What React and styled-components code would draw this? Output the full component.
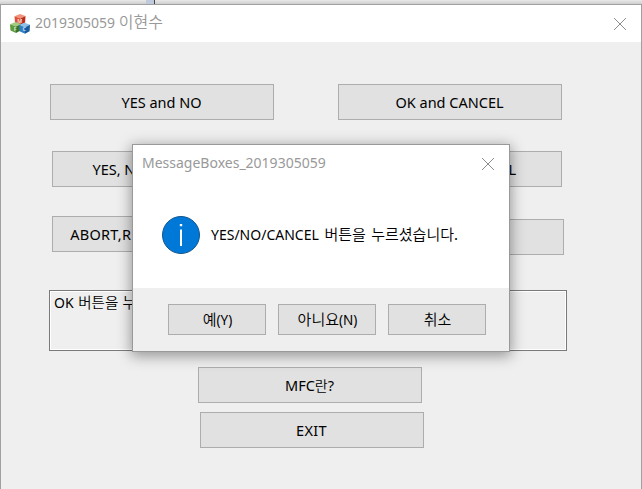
import React from "react";
import styled, { createGlobalStyle } from "styled-components";

const Global = createGlobalStyle`
  html, body { margin: 0; padding: 0; }
  body { overflow: hidden; background: #efefef; }
  * { box-sizing: border-box; }
`;

const Desktop = styled.div`
  position: relative;
  width: 642px;
  height: 489px;
  overflow: hidden;
  background: #efefef;
  font-family: "Noto Sans", "Noto Sans CJK KR", sans-serif;
  color: #000;
`;

const Backdrop = styled.div`
  display: flex;
  height: 4px;
  background: linear-gradient(#e9e9e9, #cfcfcf);
`;

const BackdropTab = styled.div`
  width: 9px;
  margin-left: 146px;
  background: #bfcbdc;
  border-right: 1px solid #444;
`;

const Window = styled.div`
  height: 485px;
  border: 1px solid #a0a0a0;
  border-bottom: 0;
  background: #efefef;
`;

const TitleBar = styled.header`
  display: flex;
  align-items: center;
  height: 37px;
  padding: 0 15px 0 9px;
  background: #fff;
`;

const Title = styled.h1`
  flex: 1;
  margin: 0 0 1px 5px;
  font-size: 14px;
  line-height: 20px;
  font-weight: 400;
  letter-spacing: ${(p) => p.$tracking || 0}px;
  color: #999;
  white-space: pre;
`;

const Korean = styled.span`
  font-family: "Noto Sans CJK KR", sans-serif;
  font-size: ${(p) => p.$size || 15}px;
  font-weight: 350;
  line-height: 1;
  letter-spacing: ${(p) => p.$tracking || 0}px;
`;

const Content = styled.main`
  display: flex;
  flex-direction: column;
  align-items: flex-start;
`;

const ButtonRow = styled.div`
  display: flex;
  gap: ${(p) => p.$gap}px;
  margin: ${(p) => p.$top}px 0 0 ${(p) => p.$left}px;
`;

const Button = styled.button`
  width: 224px;
  height: 36px;
  margin: ${(p) => p.$drop || 0}px 0 0;
  padding: 0 1px 0 0;
  border: 1px solid #adadad;
  background: #e1e1e1;
  color: #000;
  font: 400 14.5px/20px "Noto Sans", "Noto Sans CJK KR", sans-serif;
  letter-spacing: ${(p) => p.$tracking || 0}px;
  white-space: pre;
`;

const Output = styled.div`
  width: 518px;
  height: 61px;
  margin: 35px 0 0 48px;
  padding: 1px 4px;
  border: 1px solid #7a7a7a;
  box-shadow: inset 0 0 0 1px #fff;
  font-size: 14px;
  line-height: 22px;
  word-spacing: 1px;
  white-space: pre;
`;

const Dialog = styled.section`
  position: absolute;
  left: 132px;
  top: 144px;
  width: 378px;
  height: 208px;
  border: 1px solid #999;
  background: #fff;
  box-shadow: 0 3px 13px 1px rgba(0, 0, 0, 0.38);
`;

const DialogTitle = styled(TitleBar)`
  padding: 0 15px 0 4px;
`;

const Message = styled.div`
  display: flex;
  align-items: center;
  gap: 11px;
  height: 106px;
  padding-left: 29px;
`;

const MessageText = styled.p`
  margin: 0 0 1px;
  font-size: 14px;
  line-height: 20px;
  word-spacing: 2px;
  white-space: pre;
`;

const Actions = styled.footer`
  display: flex;
  gap: 12px;
  height: 63px;
  padding: 16px 0 0 35px;
  background: #efefef;
`;

const ActionButton = styled(Button)`
  width: 98px;
  height: 31px;
  padding: 0 0 0 1px;
  font-size: 13.5px;
`;

const CloseIcon = () => (
  <svg width="12" height="12" viewBox="0 0 12 12" fill="none" stroke="#8c8c8c">
    <path d="M0 0 12 12M12 0 0 12" />
  </svg>
);

const Cube = ({ x, y, top, left, right, letter }) => (
  <g transform={`translate(${x} ${y})`}>
    <path d="M0 2.2 5.5 0 11 2 6 4.4Z" fill={top} />
    <path d="M0 2.2 6 4.4V11L.5 8.5Z" fill={left} />
    <path d="M6 4.4 11 2 10.6 8.5 6 11Z" fill={right} />
    <text x="5.2" y="8.6" fontSize="5.5" fontWeight="600" textAnchor="middle" fill="#fff" fillOpacity="0.85">
      {letter}
    </text>
  </g>
);

const BlocksIcon = () => (
  <svg width="20" height="20" viewBox="0 0 20 20">
    <Cube x={4.5} y={0} top="#f0937a" left="#e05034" right="#b92a18" letter="M" />
    <Cube x={0} y={8} top="#a3cb80" left="#5e9c3c" right="#3c7424" letter="F" />
    <Cube x={9} y={8.8} top="#8fc0ea" left="#2f7dc4" right="#175a9e" letter="C" />
  </svg>
);

const InfoIcon = () => (
  <svg width="38" height="38" viewBox="0 0 38 38">
    <circle cx="19" cy="19" r="18.5" fill="#0078d7" stroke="#10568f" />
    <path d="M18 13.5h2V30h-2zM17.8 8h2.4v2.2h-2.4z" fill="#fff" />
  </svg>
);

export default function App() {
  return (
    <Desktop>
      <Global />
      <Backdrop>
        <BackdropTab />
      </Backdrop>
      <Window>
        <TitleBar>
          <BlocksIcon />
          <Title>
            2019305059 <Korean $size={16}>이현수</Korean>
          </Title>
          <CloseIcon />
        </TitleBar>
        <Content>
          <ButtonRow $top={42} $left={49} $gap={64}>
            <Button>YES and NO</Button>
            <Button>OK and CANCEL</Button>
          </ButtonRow>
          <ButtonRow $top={31} $left={51} $gap={62}>
            <Button>YES, NO and CANCEL</Button>
            <Button $tracking={0.2}>RETRY and CANCEL</Button>
          </ButtonRow>
          <ButtonRow $top={29} $left={51} $gap={64}>
            <Button $tracking={0.25}>ABORT,RETRY and IGNORE</Button>
            <Button $drop={3} />
          </ButtonRow>
          <Output>
            OK <Korean $size={14.5}>버튼을 누르셨습니다.</Korean>
          </Output>
          <ButtonRow $top={16} $left={197}>
            <Button>
              MFC<Korean $size={14}>란</Korean>?
            </Button>
          </ButtonRow>
          <ButtonRow $top={9} $left={199}>
            <Button $tracking={0.4}>EXIT</Button>
          </ButtonRow>
        </Content>
      </Window>
      <Dialog>
        <DialogTitle>
          <Title>MessageBoxes_2019305059</Title>
          <CloseIcon />
        </DialogTitle>
        <Message>
          <InfoIcon />
          <MessageText>
            YES/NO/CANCEL <Korean>버튼을 누르셨습니다.</Korean>
          </MessageText>
        </Message>
        <Actions>
          <ActionButton>
            <Korean>예</Korean>(Y)
          </ActionButton>
          <ActionButton>
            <Korean>아니요</Korean>(N)
          </ActionButton>
          <ActionButton>
            <Korean>취소</Korean>
          </ActionButton>
        </Actions>
      </Dialog>
    </Desktop>
  );
}
